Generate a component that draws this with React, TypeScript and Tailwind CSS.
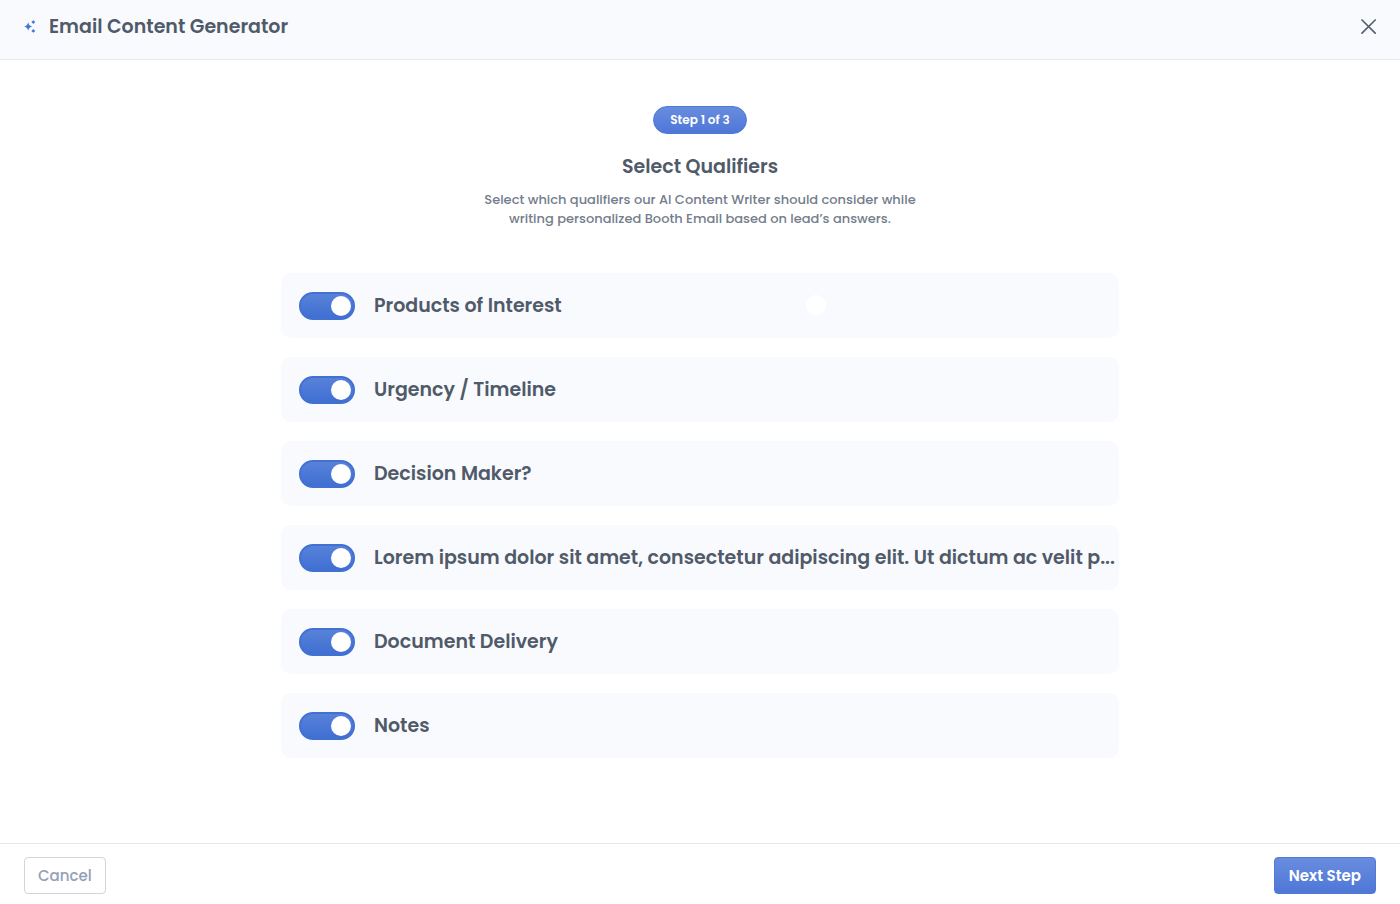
import { useState } from "react";

const qualifiers = [
  "Products of Interest",
  "Urgency / Timeline",
  "Decision Maker?",
  "Lorem ipsum dolor sit amet, consectetur adipiscing elit. Ut dictum ac velit p...",
  "Document Delivery",
  "Notes",
];

function SparkleIcon() {
  return (
    <svg viewBox="0 0 12 14" className="h-3.5 w-3 shrink-0 text-[#4576d8]" fill="currentColor" aria-hidden="true">
      <path d="M4.2 2.2 C5 5 5.7 5.7 8.6 6.5 C5.7 7.3 5 8 4.2 10.8 C3.4 8 2.7 7.3 -0.2 6.5 C2.7 5.7 3.4 5 4.2 2.2Z" />
      <path d="M9.3 0.2 L11.2 2.1 L9.3 4 L7.4 2.1Z" />
      <path d="M9.3 9 L11.2 10.9 L9.3 12.8 L7.4 10.9Z" />
    </svg>
  );
}

function Qualifier({ label, marker }: { label: string; marker: boolean }) {
  const [on, setOn] = useState(true);
  return (
    <li className="relative rounded-[10px] bg-[#f9fafe]">
      <label className="flex h-[65px] cursor-pointer items-center gap-[19px] pl-[18px]">
        <input
          type="checkbox"
          role="switch"
          checked={on}
          onChange={() => setOn(!on)}
          className="flex h-7 w-14 shrink-0 cursor-pointer appearance-none items-center rounded-full border-2 border-[#c4cad6] bg-[#c4cad6] px-0.5 before:size-5 before:rounded-full before:bg-white checked:justify-end checked:border-[#4271d2] checked:bg-[#4674d4] checked:bg-linear-to-b checked:from-[#5882da] checked:to-[#3f6fd2]"
        />
        <span className="min-w-0 truncate">{label}</span>
      </label>
      {marker && (
        <span className="pointer-events-none absolute top-[22px] left-[525px] size-5 rounded-full bg-white" />
      )}
    </li>
  );
}

export default function App() {
  return (
    <div className="flex min-h-screen flex-col bg-white font-['Poppins','Inter',sans-serif] text-[#505a69]">
      <header className="flex items-start justify-between border-b border-[#e4eaf2] bg-[#f9fafe] px-6 pt-3 pb-[17px]">
        <div className="flex items-center gap-[13px]">
          <SparkleIcon />
          <h1 className="text-[19px] leading-[30px] font-semibold">Email Content Generator</h1>
        </div>
        <button type="button" aria-label="Close" className="flex h-[30px] cursor-pointer items-center">
          <svg viewBox="0 0 16 16" className="size-4" fill="none" stroke="#566171" strokeWidth="1.7" strokeLinecap="round" aria-hidden="true">
            <path d="M2 1 L15.2 14.2 M15.2 1 L2 14.2" />
          </svg>
        </button>
      </header>

      <main className="flex flex-1 flex-col items-center px-6 pt-[46px] pb-12">
        <span className="rounded-full border border-[#5179d8] bg-linear-to-b from-[#688cde] to-[#4f77d7] px-4 py-[5px] text-xs leading-4 font-semibold text-white">
          Step 1 of 3
        </span>
        <h2 className="mt-[18px] text-[19px] leading-[30px] font-semibold">Select Qualifiers</h2>
        <p className="mt-2 text-center text-[13px] leading-[19px] font-medium text-[#747d8b]">
          Select which qualifiers our AI Content Writer should consider while
          <br />
          writing personalized Booth Email based on lead’s answers.
        </p>
        <ul className="mt-[45px] flex w-full max-w-[838px] flex-col gap-[19px] text-[19px] leading-[30px] font-semibold">
          {qualifiers.map((label, index) => (
            <Qualifier key={label} label={label} marker={index === 0} />
          ))}
        </ul>
      </main>

      <footer className="flex items-center justify-between border-t border-[#e1e8ef] px-6 pt-[13px] pb-[10px]">
        <button type="button" className="h-[37px] cursor-pointer rounded border border-[#d2d4d8] bg-white px-[13px] pt-0.5 text-[15px] font-medium text-[#93a0b7]">
          Cancel
        </button>
        <button type="button" className="h-[37px] cursor-pointer rounded border border-[#5179d8] bg-linear-to-b from-[#688cde] to-[#4f77d7] px-[14px] pt-0.5 text-[15px] font-semibold text-white">
          Next Step
        </button>
      </footer>
    </div>
  );
}
